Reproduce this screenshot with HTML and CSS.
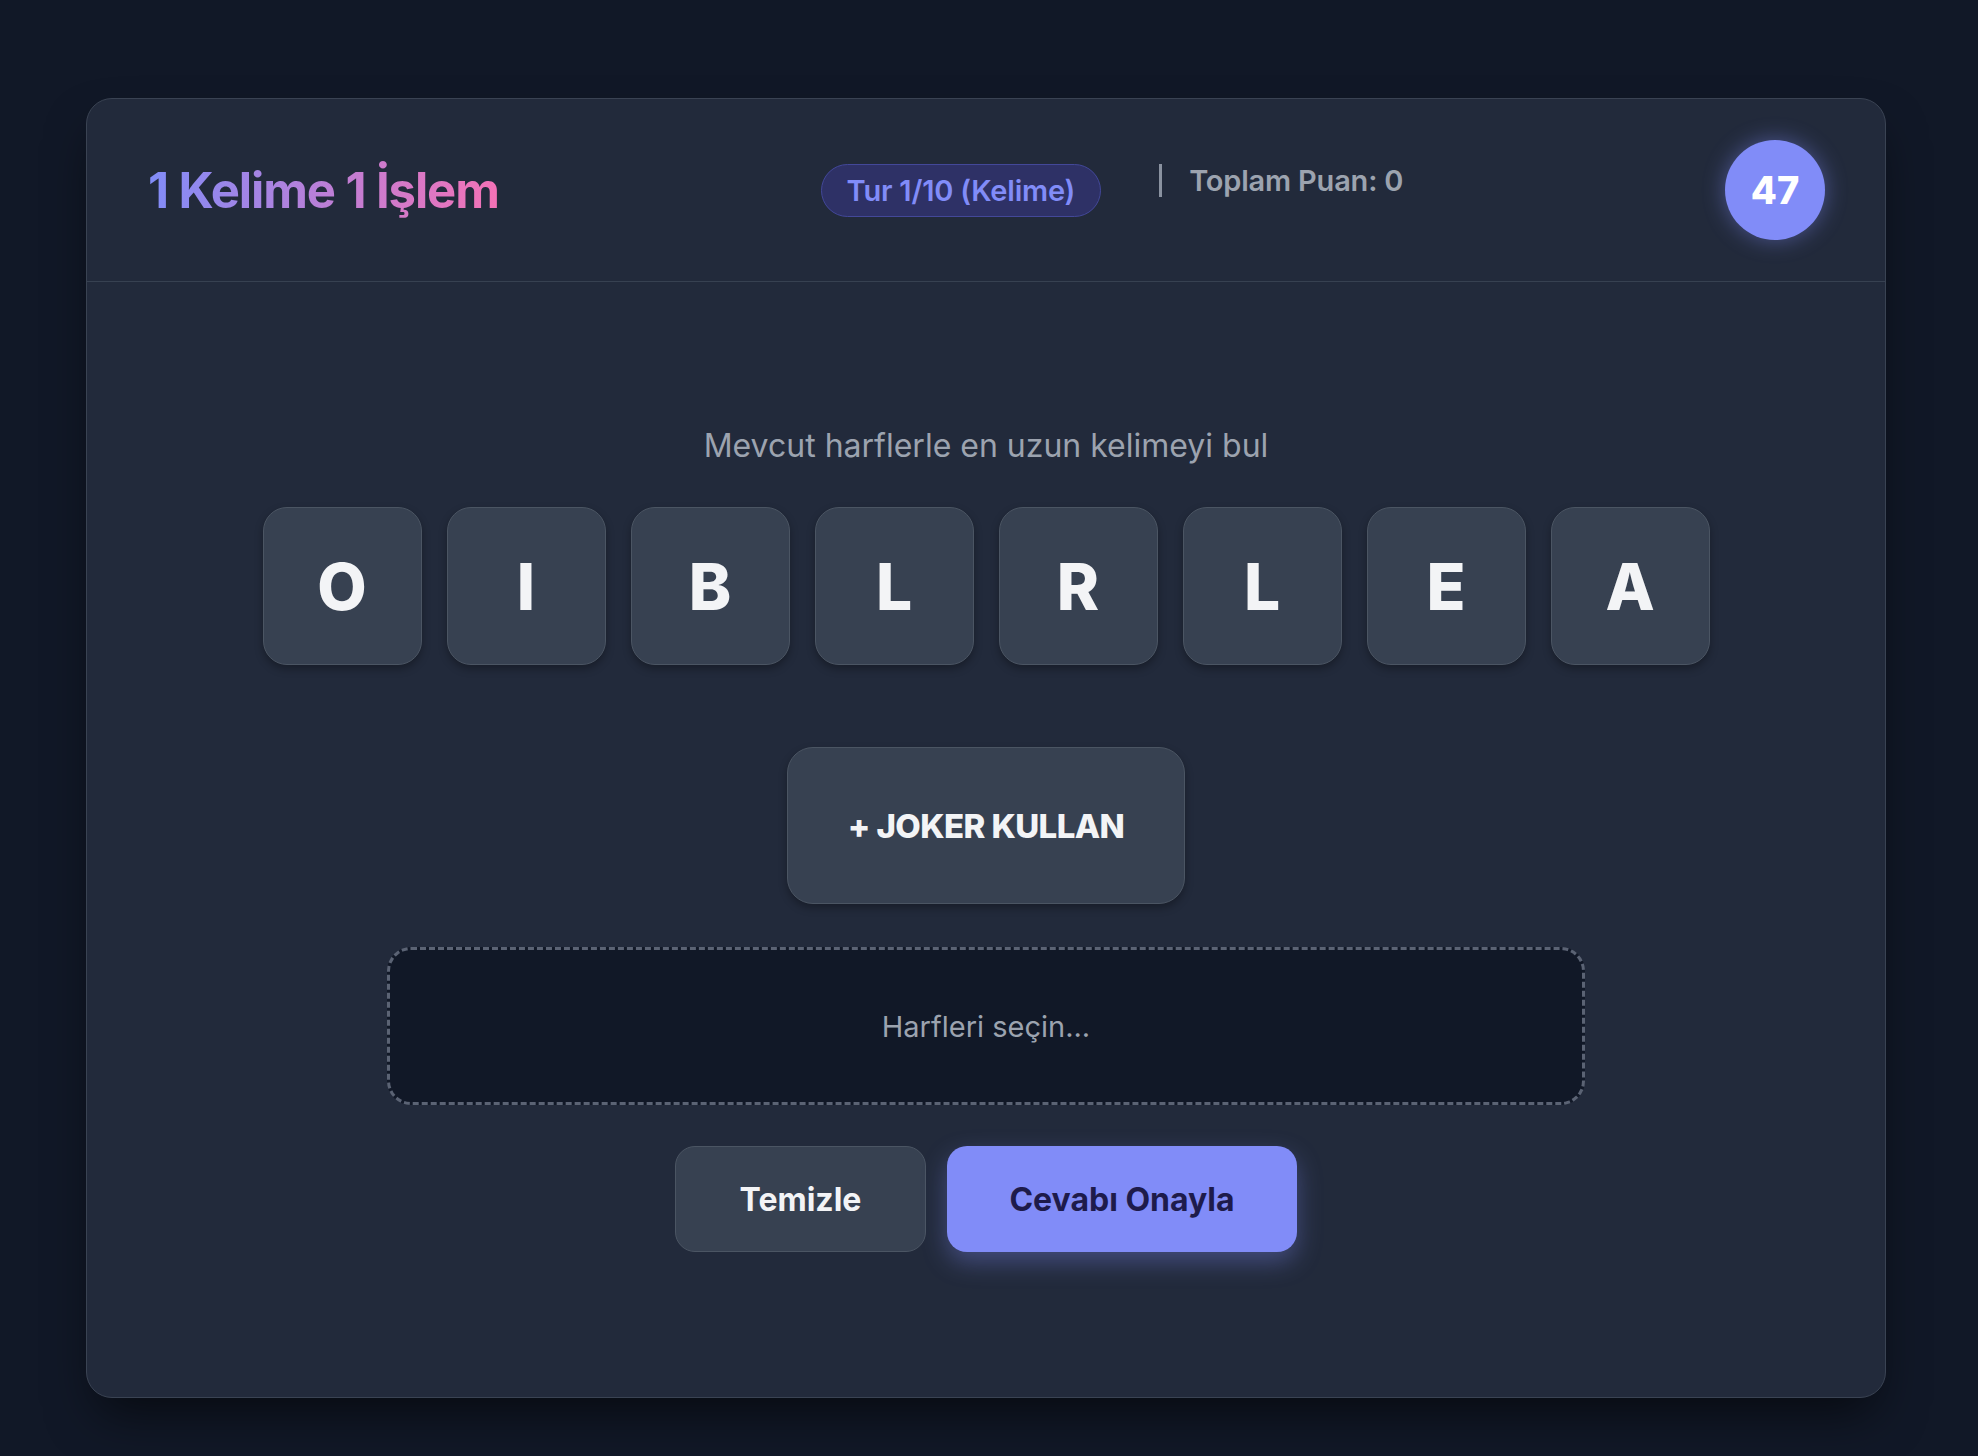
FILE: index.html
```html
<!DOCTYPE html>
<html lang="tr">
<head>
<meta charset="utf-8">
<title>1 Kelime 1 İşlem</title>
<link rel="stylesheet" href="styles.css">
</head>
<body>
<main class="card">
  <header class="header">
    <h1 class="title">1 Kelime 1 İşlem</h1>
    <div class="status">
      <span class="badge">Tur 1/10 (Kelime)</span>
      <span class="score">Toplam Puan: 0</span>
    </div>
    <div class="timer">47</div>
  </header>
  <section class="content">
    <p class="hint">Mevcut harflerle en uzun kelimeyi bul</p>
    <div class="tiles">
      <button class="tile">O</button>
      <button class="tile">I</button>
      <button class="tile">B</button>
      <button class="tile">L</button>
      <button class="tile">R</button>
      <button class="tile">L</button>
      <button class="tile">E</button>
      <button class="tile">A</button>
    </div>
    <button class="joker">+ JOKER KULLAN</button>
    <div class="answer">Harfleri seçin...</div>
    <div class="actions">
      <button class="btn btn-clear">Temizle</button>
      <button class="btn btn-submit">Cevabı Onayla</button>
    </div>
  </section>
</main>
</body>
</html>
```
FILE: styles.css
```css
* { box-sizing: border-box; }
html, body { margin: 0; padding: 0; }
body {
  background: #111827;
  font-family: Inter, "Noto Sans", "Liberation Sans", sans-serif;
  color: #f3f4f6;
  min-height: 1456px;
  padding: 98px 0 0 86px;
}
button { font-family: inherit; cursor: pointer; }
.card {
  width: 1800px;
  background: #222a3b;
  border: 1px solid #3a4353;
  border-radius: 26px;
  box-shadow: 0 25px 50px -12px rgba(0, 0, 0, 0.6);
  overflow: hidden;
}
.header {
  height: 183px;
  border-bottom: 1px solid #374151;
  display: flex;
  align-items: center;
  justify-content: space-between;
  padding: 0 60px 0 61px;
}
.title {
  margin: 0;
  font-size: 49px;
  font-weight: 700;
  letter-spacing: -1.1px;
  background: linear-gradient(to right, #818cf8, #f472b6);
  -webkit-background-clip: text;
  background-clip: text;
  color: transparent;
  line-height: 1.2;
  padding-top: 4px;
  padding-bottom: 2px;
}
.status {
  display: flex;
  align-items: flex-start;
}
.badge {
  height: 53px;
  padding: 0 25px;
  border-radius: 999px;
  background: #2e3166;
  border: 1.5px solid #434899;
  color: #818cf8;
  font-size: 29px;
  font-weight: 600;
  letter-spacing: -0.2px;
  display: flex;
  align-items: center;
}
.score {
  margin-left: 58px;
  border-left: 3px solid #8a92a0;
  padding-left: 27px;
  color: #9ca3af;
  font-size: 29px;
  font-weight: 600;
  letter-spacing: -0.2px;
  line-height: 33px;
  height: 33px;
}
.timer {
  width: 100px;
  height: 100px;
  border-radius: 50%;
  background: #818cf8;
  color: #ffffff;
  font-size: 38px;
  font-weight: 800;
  display: flex;
  align-items: center;
  justify-content: center;
  box-shadow: 0 0 22px rgba(129, 140, 248, 0.45);
}
.content {
  display: flex;
  flex-direction: column;
  align-items: center;
  padding: 141px 0 145px;
}
.hint {
  margin: 0 0 38px;
  font-size: 32px;
  line-height: 46px;
  color: #9ca3af;
}
.tiles {
  display: flex;
  gap: 25px;
  margin-bottom: 82px;
}
.tile {
  width: 159px;
  height: 158px;
  border-radius: 24px;
  background: #374151;
  border: 1px solid #4b5563;
  color: #f3f4f6;
  font-size: 64px;
  font-weight: 800;
  box-shadow: 0 4px 8px rgba(0, 0, 0, 0.3);
  display: flex;
  align-items: center;
  justify-content: center;
  padding: 0;
}
.joker {
  width: 398px;
  height: 157px;
  border-radius: 26px;
  background: #374151;
  border: 1px solid #4b5563;
  color: #f3f4f6;
  font-size: 33px;
  font-weight: 800;
  letter-spacing: -0.6px;
  box-shadow: 0 4px 8px rgba(0, 0, 0, 0.3);
  margin-bottom: 43px;
}
.answer {
  width: 1198px;
  height: 158px;
  border: 3px dashed #5b6374;
  border-radius: 24px;
  background: #111827;
  color: #9ca3af;
  font-size: 29px;
  display: flex;
  align-items: center;
  justify-content: center;
  margin-bottom: 41px;
}
.actions {
  display: flex;
  gap: 21px;
}
.btn {
  height: 106px;
  border-radius: 20px;
  font-size: 32px;
  font-weight: 700;
}
.btn-clear {
  width: 251px;
  background: #374151;
  border: 1px solid #4b5563;
  color: #f3f4f6;
  padding: 0;
}
.btn-submit {
  width: 350px;
  padding: 0;
  background: #818cf8;
  border: none;
  color: #1e1b4b;
  box-shadow: 0 10px 25px rgba(129, 140, 248, 0.35);
}
```
